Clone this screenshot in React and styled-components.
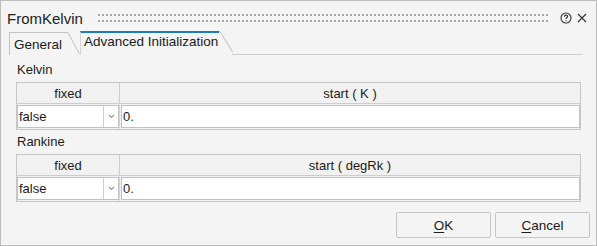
import styled, { createGlobalStyle } from 'styled-components';

const GlobalStyle = createGlobalStyle`
  body {
    margin: 0;
    background: #ffffff;
    font-family: "Liberation Sans", Arial, sans-serif;
  }
`;

const Dialog = styled.div`
  width: 597px;
  height: 246px;
  box-sizing: border-box;
  border: 1px solid #bdbdbd;
  background: #f4f4f4;
  color: #1b1b1b;
  display: flex;
  flex-direction: column;
`;

const TitleBar = styled.div`
  height: 30px;
  display: flex;
  align-items: flex-start;
  padding: 0 9px 0 6px;
`;

const Title = styled.span`
  font-size: 15px;
  line-height: 17px;
  margin-top: 9px;
  color: #222;
`;

const GripSvg = styled.svg`
  flex: 1;
  height: 12px;
  margin: 11px 11px 0 15px;
`;

const IconButton = styled.span`
  display: flex;
  margin-top: ${(p) => p.$top}px;
  margin-left: ${(p) => p.$gap}px;
`;

const TabBar = styled.div`
  height: 24px;
  display: flex;
  padding-left: 8px;
`;

const Tab = styled.div`
  position: relative;
  box-sizing: border-box;
  width: ${(p) => p.$width}px;
  margin-top: ${(p) => (p.$active ? 0 : 1)}px;
  margin-left: ${(p) => p.$offset}px;
  padding: ${(p) => (p.$active ? '1px 0 0 3px' : '4px 0 0 4px')};
  border-top: ${(p) => (p.$active ? '2px solid #1b7db3' : '1px solid #c2c2c2')};
  border-left: 1px solid ${(p) => (p.$active ? '#d6d6d6' : '#c2c2c2')};
  font-size: 13.5px;
  line-height: 16px;
  color: #1b1b1b;
  white-space: nowrap;

  &::after {
    content: '';
    position: absolute;
    left: 100%;
    top: ${(p) => (p.$active ? -2 : -1)}px;
    width: 1px;
    height: ${(p) => p.$slant}px;
    background: #c4c4c4;
    transform-origin: top left;
    transform: rotate(${(p) => -p.$angle}deg);
  }
`;

const TabFill = styled.div`
  flex: 1;
  margin: 0 14px 0 13px;
  border-bottom: 1px solid #cfcfcf;
`;

const Content = styled.div`
  padding: 7px 15px 0 15px;
  display: flex;
  flex-direction: column;
  gap: 4px;
`;

const Section = styled.div`
  display: flex;
  flex-direction: column;
  gap: 5px;
`;

const Label = styled.div`
  font-size: 13px;
  line-height: 15px;
  padding-left: 1px;
`;

const Table = styled.div`
  display: grid;
  grid-template-columns: 103px 1fr;
  border: 1px solid #c6c6c6;
  background: #f1f1f1;
`;

const HeadCell = styled.div`
  height: 20px;
  line-height: 21px;
  text-align: center;
  font-size: 13px;
  border-bottom: 1px solid #cdcdcd;
  border-right: ${(p) => (p.$divider ? '1px solid #cdcdcd' : 'none')};
`;

const DataCell = styled.div`
  height: 25px;
  box-sizing: border-box;
  padding: 1px 0 1px ${(p) => (p.$divider ? 0 : 1)}px;
  border-right: ${(p) => (p.$divider ? '1px solid #d4d4d4' : 'none')};
`;

const Combo = styled.div`
  height: 100%;
  box-sizing: border-box;
  display: flex;
  background: #fff;
  border: 1px solid #c2c2c2;
`;

const ComboText = styled.span`
  flex: 1;
  font-size: 13px;
  line-height: 21px;
  padding-left: 1px;
`;

const ComboArrow = styled.span`
  width: 14px;
  display: flex;
  align-items: center;
  justify-content: center;
  border-left: 1px solid #d0d0d0;
`;

const Field = styled.div`
  height: 100%;
  box-sizing: border-box;
  background: #fff;
  border: 1px solid #c2c2c2;
  font-size: 13px;
  line-height: 21px;
  padding-left: 1px;
`;

const Footer = styled.div`
  display: flex;
  justify-content: flex-end;
  gap: 4px;
  margin-top: 10px;
  padding-right: 6px;
`;

const Button = styled.button`
  width: 95px;
  height: 26px;
  border: 1px solid #c6c6c6;
  border-radius: 2px;
  background: #f4f4f4;
  font-family: "Liberation Sans", Arial, sans-serif;
  font-size: 13.5px;
  color: #1b1b1b;
  padding: 0;

  u {
    text-decoration-thickness: 1px;
    text-underline-offset: 2px;
  }
`;

const Grip = () => (
  <GripSvg>
    <defs>
      <pattern id="grip-dots" width="4" height="6" patternUnits="userSpaceOnUse">
        <rect x="0" y="2" width="2" height="2" fill="#a8a8a8" />
      </pattern>
    </defs>
    <rect width="100%" height="12" fill="url(#grip-dots)" />
  </GripSvg>
);

const HelpIcon = () => (
  <svg width="12" height="12" viewBox="0 0 12 12">
    <circle cx="6" cy="6" r="5" fill="none" stroke="#333" strokeWidth="1.1" />
    <path
      d="M4.4 4.7 C4.4 3.6 5.2 3.1 6 3.1 C6.9 3.1 7.6 3.7 7.6 4.5 C7.6 5.5 6.1 5.6 6.1 6.9"
      fill="none"
      stroke="#333"
      strokeWidth="1.1"
    />
    <circle cx="6.1" cy="8.6" r="0.65" fill="#333" />
  </svg>
);

const CloseIcon = () => (
  <svg width="10" height="10" viewBox="0 0 10 10">
    <path d="M1 1 L9 9 M9 1 L1 9" stroke="#333" strokeWidth="1.1" />
  </svg>
);

const Chevron = () => (
  <svg width="7" height="5" viewBox="0 0 7 5">
    <path d="M1 1 L3.5 3.5 L6 1" fill="none" stroke="#9a9a9a" strokeWidth="1.2" />
  </svg>
);

const params = [
  { name: 'Kelvin', unit: 'K' },
  { name: 'Rankine', unit: 'degRk' },
];

function ParamTable({ name, unit }) {
  return (
    <Section>
      <Label>{name}</Label>
      <Table>
        <HeadCell $divider>fixed</HeadCell>
        <HeadCell>start ( {unit} )</HeadCell>
        <DataCell $divider>
          <Combo>
            <ComboText>false</ComboText>
            <ComboArrow>
              <Chevron />
            </ComboArrow>
          </Combo>
        </DataCell>
        <DataCell>
          <Field>0.</Field>
        </DataCell>
      </Table>
    </Section>
  );
}

export default function App() {
  return (
    <>
      <GlobalStyle />
      <Dialog>
        <TitleBar>
          <Title>FromKelvin</Title>
          <Grip />
          <IconButton $top={11} $gap={0}>
            <HelpIcon />
          </IconButton>
          <IconButton $top={12} $gap={5}>
            <CloseIcon />
          </IconButton>
        </TitleBar>
        <TabBar>
          <Tab $width={58} $offset={0} $slant={25} $angle={28.6}>
            General
          </Tab>
          <Tab $active $width={139} $offset={13} $slant={25} $angle={31.8}>
            Advanced Initialization
          </Tab>
          <TabFill />
        </TabBar>
        <Content>
          {params.map((p) => (
            <ParamTable key={p.name} name={p.name} unit={p.unit} />
          ))}
        </Content>
        <Footer>
          <Button>
            <u>O</u>K
          </Button>
          <Button>
            <u>C</u>ancel
          </Button>
        </Footer>
      </Dialog>
    </>
  );
}
